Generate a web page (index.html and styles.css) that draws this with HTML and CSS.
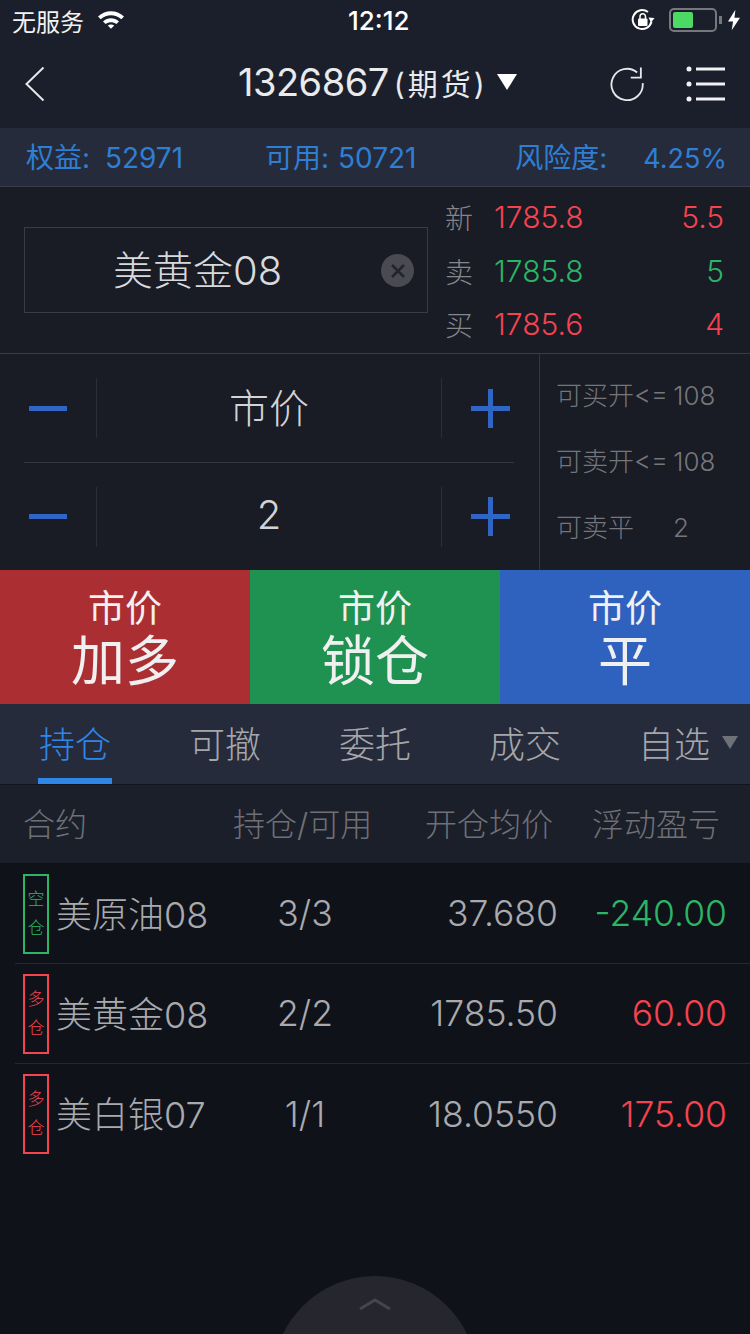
FILE: index.html
```html
<!DOCTYPE html>
<html lang="zh-CN">
<head>
    <meta charset="UTF-8">
    <meta name="viewport" content="width=device-width, initial-scale=1.0">
    <title>交易</title>
    <link rel="stylesheet" href="styles.css">
</head>
<body>
    <div class="page">
        <div class="top">
            <div class="status-bar">
                <div class="status-left">
                    <span>无服务</span>
                    <svg class="wifi" width="28" height="20" viewBox="0 0 28 20">
                        <path d="M1 7.5C8.5 .5 19.500 .5 27 7.500L24.300 10.300C18.300 5 9.700 5 3.700 10.300Z" fill="#fff"/>
                        <path d="M6 12.500C10.800 8.300 17.200 8.300 22 12.500L19.400 15.100C16.100 12.500 11.900 12.500 8.600 15.100Z" fill="#fff"/>
                        <path d="M10.800 16.600C12.700 15.200 15.300 15.200 17.200 16.600L14 19.800Z" fill="#fff"/>
                    </svg>
                </div>
                <div class="status-time">12:12</div>
                <div class="status-right">
                    <svg width="24" height="24" viewBox="0 0 24 24">
                        <path d="M20.500 13.500A9.500 9.500 0 1 1 17 4" fill="none" stroke="#fff" stroke-width="2"/>
                        <path d="M17.500 9.500L23.500 10L20 14.500Z" fill="#fff"/>
                        <rect x="7" y="10.500" width="9.500" height="7.500" rx="1" fill="#fff"/>
                        <path d="M9 11V8.500A2.700 2.700 0 0 1 14.500 8.500V11" fill="none" stroke="#fff" stroke-width="1.500"/>
                    </svg>
                    <div class="battery"><div class="battery-fill"></div></div>
                    <div class="battery-cap"></div>
                    <svg width="12" height="22" viewBox="0 0 13 22"><path d="M8 0L0 12.500H5.500L4 22L13 8.500H7Z" fill="#fff"/></svg>
                </div>
            </div>
            <div class="nav-bar">
                <svg class="nav-back" width="22" height="36" viewBox="0 0 22 36"><path d="M19.500 1.500L2.500 18L19.500 34.500" fill="none" stroke="#e6e7ea" stroke-width="2"/></svg>
                <div class="nav-title">
                    <span class="nav-num">1326867</span><span class="nav-type">(期货)</span>
                    <span class="nav-arrow"></span>
                </div>
                <div class="nav-icons">
                    <svg width="35" height="36" viewBox="0 0 38 38">
                        <path d="M29.500 6.500A17 17 0 1 0 35.500 18" fill="none" stroke="#e6e7ea" stroke-width="2"/>
                        <path d="M33.500 1V12H22.500" fill="none" stroke="#e6e7ea" stroke-width="2"/>
                    </svg>
                    <svg width="40" height="36" viewBox="0 0 40 36">
                        <circle cx="3" cy="3" r="2.500" fill="#f2f2f4"/><rect x="10" y="1.500" width="29" height="3" fill="#f2f2f4"/>
                        <circle cx="3" cy="18" r="2.500" fill="#f2f2f4"/><rect x="10" y="16.500" width="29" height="3" fill="#f2f2f4"/>
                        <circle cx="3" cy="33" r="2.500" fill="#f2f2f4"/><rect x="10" y="31.500" width="29" height="3" fill="#f2f2f4"/>
                    </svg>
                </div>
            </div>
        </div>

        <div class="account-bar">
            <span class="account-a">权益: <span class="account-num">52971</span></span>
            <span class="account-b">可用: <span class="account-num-b">50721</span></span>
            <span class="account-c">风险度: <span class="account-pct">4.25%</span></span>
        </div>

        <div class="quote-panel">
            <div class="contract-box">
                <span class="contract-name">美黄金08</span>
                <span class="clear-btn">
                    <svg width="16" height="16" viewBox="0 0 16 16"><path d="M2 2L14 14M14 2L2 14" stroke="#23242c" stroke-width="2.500"/></svg>
                </span>
            </div>
            <div class="quotes">
                <div class="quote-row"><span class="quote-label">新</span><span class="quote-price red">1785.8</span><span class="quote-size red">5.5</span></div>
                <div class="quote-row"><span class="quote-label">卖</span><span class="quote-price green">1785.8</span><span class="quote-size green">5</span></div>
                <div class="quote-row"><span class="quote-label">买</span><span class="quote-price red">1785.6</span><span class="quote-size red">4</span></div>
            </div>
        </div>

        <div class="order-panel">
            <div class="steppers">
                <div class="stepper">
                    <div class="step-btn"><span class="minus"></span></div>
                    <div class="step-value">市价</div>
                    <div class="step-btn"><span class="plus"></span></div>
                </div>
                <div class="stepper">
                    <div class="step-btn"><span class="minus"></span></div>
                    <div class="step-value">2</div>
                    <div class="step-btn"><span class="plus"></span></div>
                </div>
            </div>
            <div class="limits">
                <div>可买开&lt;= 108</div>
                <div>可卖开&lt;= 108</div>
                <div>可卖平<span class="limit-num">2</span></div>
            </div>
        </div>

        <div class="actions">
            <div class="action action-red"><span class="action-small">市价</span><span class="action-big">加多</span></div>
            <div class="action action-green"><span class="action-small">市价</span><span class="action-big">锁仓</span></div>
            <div class="action action-blue"><span class="action-small">市价</span><span class="action-big">平</span></div>
        </div>

        <div class="tabs">
            <div class="tab active">持仓</div>
            <div class="tab">可撤</div>
            <div class="tab">委托</div>
            <div class="tab">成交</div>
            <div class="tab tab-more">自选<span class="more-arrow"></span></div>
        </div>

        <div class="table-head">
            <span class="col-name">合约</span>
            <span class="col-qty">持仓/可用</span>
            <span class="col-price">开仓均价</span>
            <span class="col-pl">浮动盈亏</span>
        </div>

        <div class="positions">
            <div class="position">
                <span class="tag tag-green">空<br>仓</span>
                <span class="col-name">美原油08</span>
                <span class="col-qty">3/3</span>
                <span class="col-price">37.680</span>
                <span class="col-pl green">-240.00</span>
            </div>
            <div class="position">
                <span class="tag tag-red">多<br>仓</span>
                <span class="col-name">美黄金08</span>
                <span class="col-qty">2/2</span>
                <span class="col-price">1785.50</span>
                <span class="col-pl red">60.00</span>
            </div>
            <div class="position">
                <span class="tag tag-red">多<br>仓</span>
                <span class="col-name">美白银07</span>
                <span class="col-qty">1/1</span>
                <span class="col-price">18.0550</span>
                <span class="col-pl red">175.00</span>
            </div>
        </div>

        <div class="pull-up">
            <svg width="32" height="14" viewBox="0 0 32 14"><path d="M1 12L16 3L31 12" fill="none" stroke="#45464d" stroke-width="3"/></svg>
        </div>
    </div>
</body>
</html>
```

FILE: styles.css
```css
* {
    box-sizing: border-box;
}

body {
    margin: 0;
    background-color: #10121a;
    font-family: Inter, 'Noto Sans CJK SC', sans-serif;
    font-weight: 300;
}

.page {
    position: relative;
    width: 750px;
    height: 1334px;
    overflow: hidden;
    display: flex;
    flex-direction: column;
    background-color: #10121a;
}

.red {
    color: #f5434f;
}

.green {
    color: #2bb565;
}

/* top */
.top {
    height: 128px;
    background-color: #1b1f2b;
    color: #fff;
}

.status-bar {
    height: 40px;
    display: flex;
    align-items: center;
    justify-content: space-between;
    padding: 0 10px 0 12px;
    position: relative;
}

.status-left {
    display: flex;
    align-items: center;
    gap: 13px;
    font-size: 24px;
    font-weight: 400;
    color: #f2f2f2;
}

.wifi {
    margin-bottom: 2px;
}

.status-time {
    position: absolute;
    left: 348px;
    font-size: 26px;
    font-weight: 500;
}

.status-right {
    display: flex;
    align-items: center;
}

.battery {
    width: 48px;
    height: 24px;
    margin-left: 14px;
    border: 2px solid #77787d;
    border-radius: 5px;
    padding: 2px;
}

.battery-fill {
    width: 20px;
    height: 100%;
    background-color: #4cd964;
    border-radius: 2px;
}

.battery-cap {
    width: 3px;
    height: 8px;
    margin: 0 6px 0 2px;
    background-color: #77787d;
}

.nav-bar {
    height: 88px;
    display: flex;
    align-items: center;
    padding: 0 24px 0 24px;
    position: relative;
}

.nav-back {
    margin-top: -1px;
}

.nav-title {
    position: absolute;
    left: 238px;
    top: 0;
    height: 84px;
    display: flex;
    align-items: center;
    color: #e9eaec;
}

.nav-num {
    font-size: 38px;
    font-weight: 400;
    letter-spacing: -0.5px;
}

.nav-type {
    font-size: 30px;
    font-weight: 400;
    margin-left: 5px;
    letter-spacing: 3px;
}

.nav-arrow {
    width: 0;
    height: 0;
    margin-left: 9px;
    border-left: 10px solid transparent;
    border-right: 10px solid transparent;
    border-top: 16px solid #fff;
}

.nav-icons {
    margin-left: auto;
    display: flex;
    align-items: center;
    gap: 41px;
}

/* account */
.account-bar {
    height: 59px;
    display: flex;
    align-items: center;
    background-color: #262b3b;
    border-bottom: 1px solid #3a3d48;
    color: #2e7fd4;
    font-size: 28px;
    font-weight: 400;
    padding-bottom: 3px;
}

.account-a {
    margin-left: 26px;
}

.account-num {
    margin-left: 7px;
}

.account-num-b {
    margin-left: 1px;
}

.account-b {
    margin-left: 82px;
}

.account-c {
    margin-left: auto;
    margin-right: 23px;
}

.account-pct {
    margin-left: 28px;
    font-size: 27px;
}

/* quote */
.quote-panel {
    height: 167px;
    display: flex;
    align-items: center;
    background-color: #191b25;
    border-bottom: 1px solid #3a3c45;
    padding: 0 26px 0 24px;
}

.contract-box {
    width: 404px;
    height: 86px;
    display: flex;
    align-items: center;
    border: 1px solid #3a3c45;
    position: relative;
    padding-bottom: 4px;
}

.contract-name {
    margin-left: 88px;
    font-size: 40px;
    color: #d8d9dc;
}

.clear-btn {
    position: absolute;
    right: 13px;
    top: 26px;
    width: 33px;
    height: 33px;
    border-radius: 50%;
    background-color: #4a4b52;
    display: flex;
    align-items: center;
    justify-content: center;
}

.quotes {
    margin-left: 17px;
    padding-top: 1px;
    flex: 1;
    display: flex;
    flex-direction: column;
}

.quote-row {
    height: 53.500px;
    display: flex;
    align-items: center;
    font-size: 30px;
}

.quote-label {
    width: 49px;
    font-size: 28px;
    color: #85868c;
}

.quote-size {
    margin-left: auto;
}

/* order */
.order-panel {
    height: 216px;
    display: flex;
    background-color: #191b25;
}

.steppers {
    width: 540px;
    padding: 0 25px 0 24px;
    border-right: 1px solid #33353f;
    display: flex;
    flex-direction: column;
}

.stepper {
    height: 108px;
    display: flex;
    align-items: center;
    color: #d2d3d6;
}

.stepper + .stepper {
    border-top: 1px solid #33353f;
}

.step-value {
    flex: 1;
    height: 60px;
    display: flex;
    align-items: center;
    justify-content: center;
    font-size: 40px;
    padding-bottom: 5px;
    border-left: 1px solid #2b2d37;
    border-right: 1px solid #2b2d37;
}

.step-btn {
    width: 72px;
    display: flex;
    justify-content: center;
    flex-shrink: 0;
}

.minus {
    width: 38px;
    height: 5px;
    margin-right: 24px;
    background-color: #2f66c6;
}

.plus {
    width: 39px;
    height: 39px;
    margin-left: 24px;
    background:
        linear-gradient(#2f66c6, #2f66c6) center / 39px 5px no-repeat,
        linear-gradient(#2f66c6, #2f66c6) center / 5px 39px no-repeat;
}

.limits {
    flex: 1;
    padding: 17px 0 17px 16px;
    display: flex;
    flex-direction: column;
    justify-content: space-between;
    font-size: 26px;
    line-height: 50px;
    word-spacing: -2px;
    color: #75767c;
}

.limit-num {
    margin-left: 39px;
}

/* action buttons */
.actions {
    height: 134px;
    display: flex;
}

.action {
    flex: 1;
    display: flex;
    flex-direction: column;
    align-items: center;
    color: #f0f0f0;
    font-weight: 400;
}

.action-small {
    font-size: 37px;
    line-height: 44px;
    margin-top: 17px;
}

.action-big {
    font-size: 54px;
    line-height: 58px;
    margin-top: 2px;
}

.action-red {
    background-color: #ab2e33;
}

.action-green {
    background-color: #1f9150;
}

.action-blue {
    background-color: #2f62bf;
}

/* tabs */
.tabs {
    height: 81px;
    display: flex;
    background-color: #262b3b;
    border-bottom: 1px solid #12141c;
}

.tab {
    width: 150px;
    display: flex;
    align-items: center;
    justify-content: center;
    font-size: 36px;
    color: #a5a6aa;
    padding-bottom: 4px;
    position: relative;
}

.tab.active {
    color: #2e86e6;
}

.tab.active::after {
    content: "";
    position: absolute;
    left: 38px;
    bottom: 0;
    width: 74px;
    height: 6px;
    background-color: #2e86e6;
}

.tab-more {
    width: auto;
    margin-left: 38px;
}

.more-arrow {
    width: 0;
    height: 0;
    margin-left: 12px;
    border-left: 8px solid transparent;
    border-right: 8px solid transparent;
    border-top: 13px solid #6f7178;
}

/* table */
.table-head,
.position {
    display: flex;
    align-items: center;
    white-space: nowrap;
}

.table-head {
    height: 78px;
    padding-left: 23px;
    padding-bottom: 5px;
    background-color: #1b1f2a;
    font-size: 32px;
    color: #6f7076;
}

.table-head .col-name {
    width: 210px;
}

.table-head .col-qty {
    width: 138px;
}

.table-head .col-price {
    margin-left: 54px;
    width: 130px;
}

.table-head .col-pl {
    margin-left: 37px;
}

.positions {
    padding-top: 1px;
}

.position {
    height: 100px;
    margin-left: 15px;
    padding-left: 8px;
    font-size: 35.500px;
    color: #a9aaae;
    border-bottom: 1px solid #262830;
}

.position:last-child {
    border-bottom: none;
}

.tag {
    width: 26px;
    height: 80px;
    display: flex;
    align-items: center;
    justify-content: center;
    text-align: center;
    border: 2px solid;
    font-size: 17px;
    line-height: 29px;
    margin-right: 7px;
    flex-shrink: 0;
}

.tag-green {
    color: #2bb565;
    border-color: #2bb565;
}

.tag-red {
    color: #f5434f;
    border-color: #f5434f;
}

.position .col-name {
    width: 190px;
    font-size: 36px;
    padding-bottom: 4px;
}

.position .col-qty {
    width: 118px;
    text-align: center;
}

.position .col-price {
    width: 194px;
    text-align: right;
}

.position .col-pl {
    width: 169px;
    text-align: right;
}

/* pull up handle */
.pull-up {
    position: absolute;
    left: 273px;
    top: 1276px;
    width: 204px;
    height: 204px;
    border-radius: 50%;
    background-color: #26272e;
    display: flex;
    justify-content: center;
    padding-top: 21px;
}

.pull-up svg {
    display: block;
}
```
